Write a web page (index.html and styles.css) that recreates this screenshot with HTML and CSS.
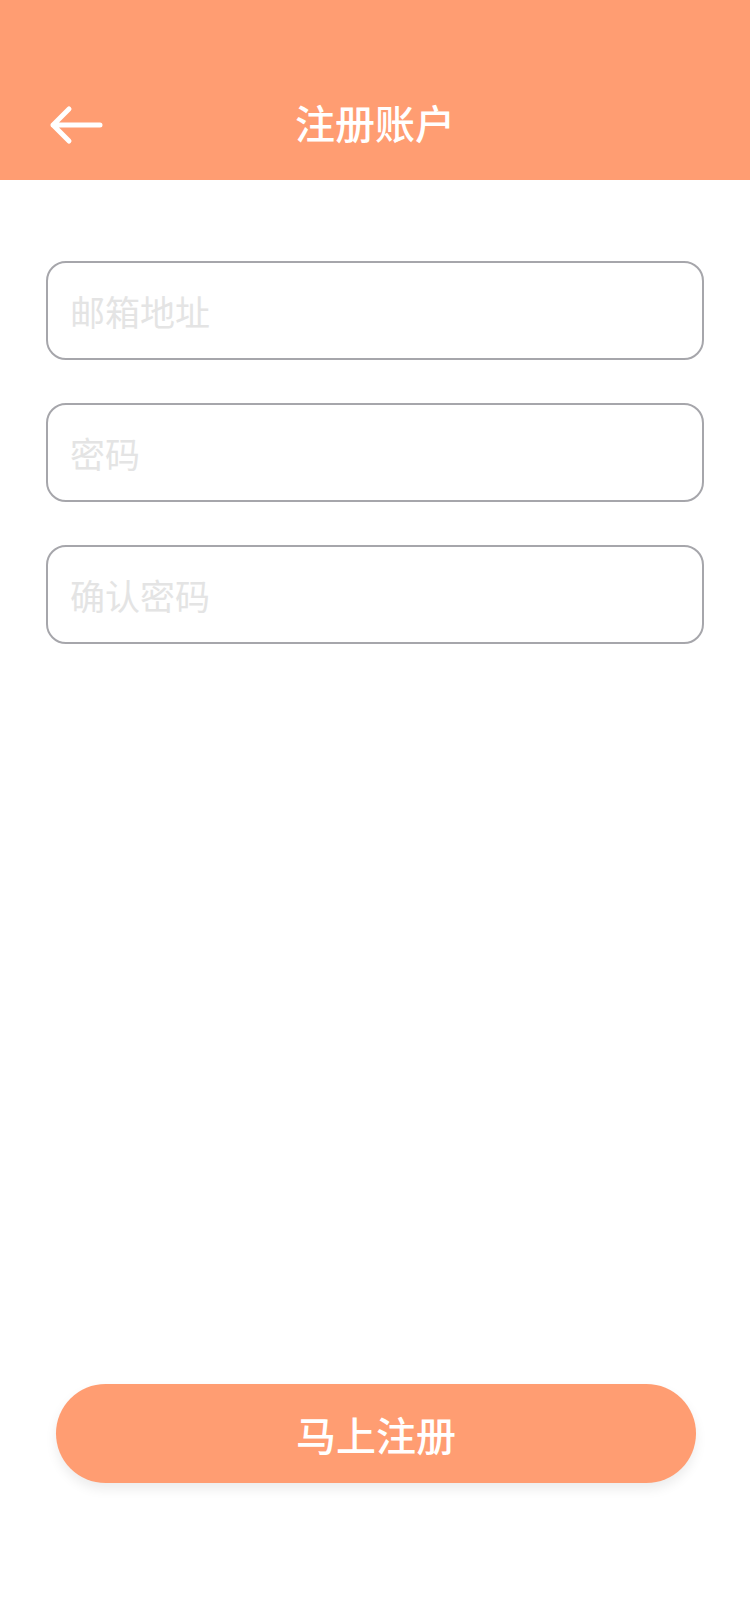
FILE: index.html
```html
<!DOCTYPE html>
<html lang="zh-CN">
<head>
    <meta charset="UTF-8">
    <meta name="viewport" content="width=device-width, initial-scale=1.0">
    <title>注册账户</title>
    <link rel="stylesheet" href="styles.css">
</head>
<body>
    <div class="page">
        <header class="topbar">
            <div class="navbar">
                <a href="javascript:void(0)" class="back">
                    <svg width="56" height="40" viewBox="0 0 56 40">
                        <path d="M21 4 L5 20 L21 36 M5 20 L52 20" fill="none" stroke="#fff" stroke-width="5" stroke-linecap="round" stroke-linejoin="round"/>
                    </svg>
                </a>
                <h1 class="title">注册账户</h1>
            </div>
        </header>

        <main class="content">
            <form class="form" action="submit" method="POST">
                <input class="field" type="email" name="email" placeholder="邮箱地址">
                <input class="field" type="password" name="password" placeholder="密码">
                <input class="field" type="password" name="confirm" placeholder="确认密码">
            </form>

            <button type="button" class="button">马上注册</button>
        </main>
    </div>
</body>
</html>
```

FILE: styles.css
```css
body {
    margin: 0;
    padding: 0;
    font-family: "Noto Sans CJK SC", "Noto Sans", sans-serif;
    background-color: #fff;
}

.page {
    display: flex;
    flex-direction: column;
    min-height: 1624px;
}

.topbar {
    background-color: #ff9d72;
    height: 180px;
    padding-top: 64px;
    box-sizing: border-box;
}

.navbar {
    position: relative;
    height: 116px;
    display: flex;
    align-items: center;
    justify-content: center;
}

.back {
    position: absolute;
    left: 48px;
    top: 41px;
    display: block;
    line-height: 0;
}

.title {
    margin: 0;
    color: #fff;
    font-size: 40px;
    font-weight: 500;
    letter-spacing: 0;
}

.content {
    flex: 1;
    display: flex;
    flex-direction: column;
    padding: 81px 46px 141px 46px;
}

.form {
    display: flex;
    flex-direction: column;
    gap: 43px;
}

.field {
    height: 99px;
    box-sizing: border-box;
    border: 2px solid #a6a6ab;
    border-radius: 20px;
    padding: 0 22px;
    font-family: "Noto Sans CJK SC", sans-serif;
    font-size: 35px;
    color: #333;
    outline: none;
    background: #fff;
}

.field::placeholder {
    color: #e4e4e4;
}

.button {
    margin: auto 8px 0 10px;
    height: 99px;
    border: none;
    border-radius: 50px;
    background-color: #ff9d72;
    color: #fff;
    font-family: "Noto Sans CJK SC", sans-serif;
    font-size: 40px;
    font-weight: 500;
    box-shadow: 0 6px 12px rgba(0, 0, 0, 0.08);
    cursor: pointer;
}
```
